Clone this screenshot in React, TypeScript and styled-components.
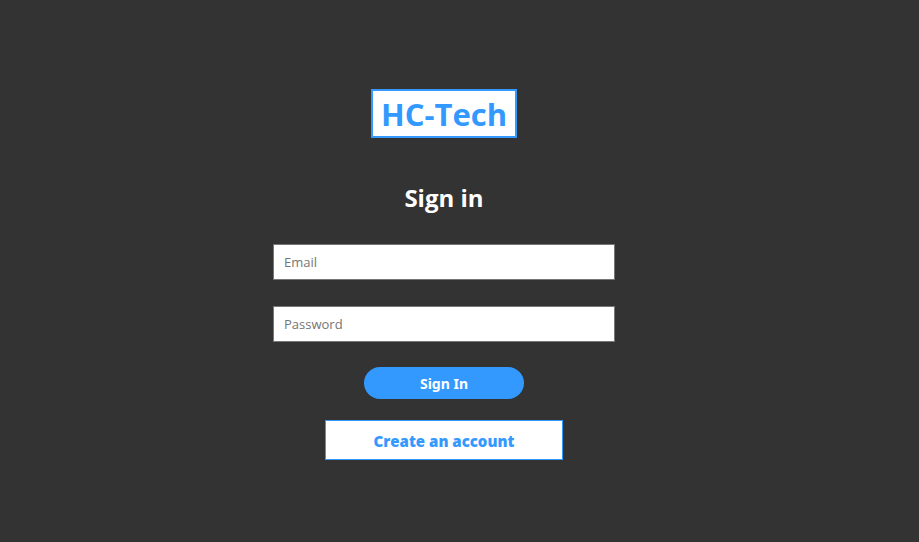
import React from "react";
import styled, { createGlobalStyle } from "styled-components";

const blue = "#3399ff";

const GlobalStyle = createGlobalStyle`
  * { box-sizing: border-box; }
  body {
    margin: 0;
    background: #333333;
    font-family: "Open Sans", "Segoe UI", sans-serif;
  }
`;

const Page = styled.main`
  display: flex;
  flex-direction: column;
  align-items: center;
  min-height: 100vh;
  padding: 89px 31px 40px 0;
`;

const Logo = styled.h1`
  margin: 0;
  padding: 2px 8px 0;
  border: 2px solid ${blue};
  background: #ffffff;
  color: ${blue};
  font-size: 31px;
  font-weight: 700;
  line-height: 43px;
`;

const Title = styled.h2`
  margin: 44px 0 30px;
  color: #ffffff;
  font-size: 24px;
  font-weight: 700;
  line-height: 32px;
`;

const Form = styled.form`
  display: flex;
  flex-direction: column;
  align-items: center;
  width: 100%;
`;

const Fields = styled.div`
  display: flex;
  flex-direction: column;
  gap: 26px;
  width: 100%;
  max-width: 342px;
  margin-bottom: 25px;
`;

const Field = styled.input`
  width: 100%;
  height: 36px;
  padding: 0 10px;
  border: 1px solid #767676;
  border-radius: 0;
  background: #ffffff;
  color: #333333;
  font: 400 13px "Open Sans", "Segoe UI", sans-serif;

  &::placeholder {
    color: #757575;
    opacity: 1;
  }
`;

const SubmitButton = styled.button`
  width: 160px;
  height: 32px;
  padding: 0;
  border: 0;
  border-radius: 16px;
  background: ${blue};
  color: #ffffff;
  font: 700 14px "Noto Sans", Tahoma, sans-serif;
  cursor: pointer;
`;

const CreateButton = styled.button`
  width: 238px;
  height: 40px;
  margin-top: 21px;
  padding: 2px 0 0;
  border: 1px solid ${blue};
  background: #ffffff;
  color: ${blue};
  font: 800 15px "Open Sans", "Segoe UI", sans-serif;
  cursor: pointer;
`;

export default function App() {
  return (
    <>
      <GlobalStyle />
      <Page>
        <Logo>HC-Tech</Logo>
        <Title>Sign in</Title>
        <Form onSubmit={(event) => event.preventDefault()}>
          <Fields>
            <Field type="email" placeholder="Email" aria-label="Email" />
            <Field type="password" placeholder="Password" aria-label="Password" />
          </Fields>
          <SubmitButton type="submit">Sign In</SubmitButton>
          <CreateButton type="button">Create an account</CreateButton>
        </Form>
      </Page>
    </>
  );
}
